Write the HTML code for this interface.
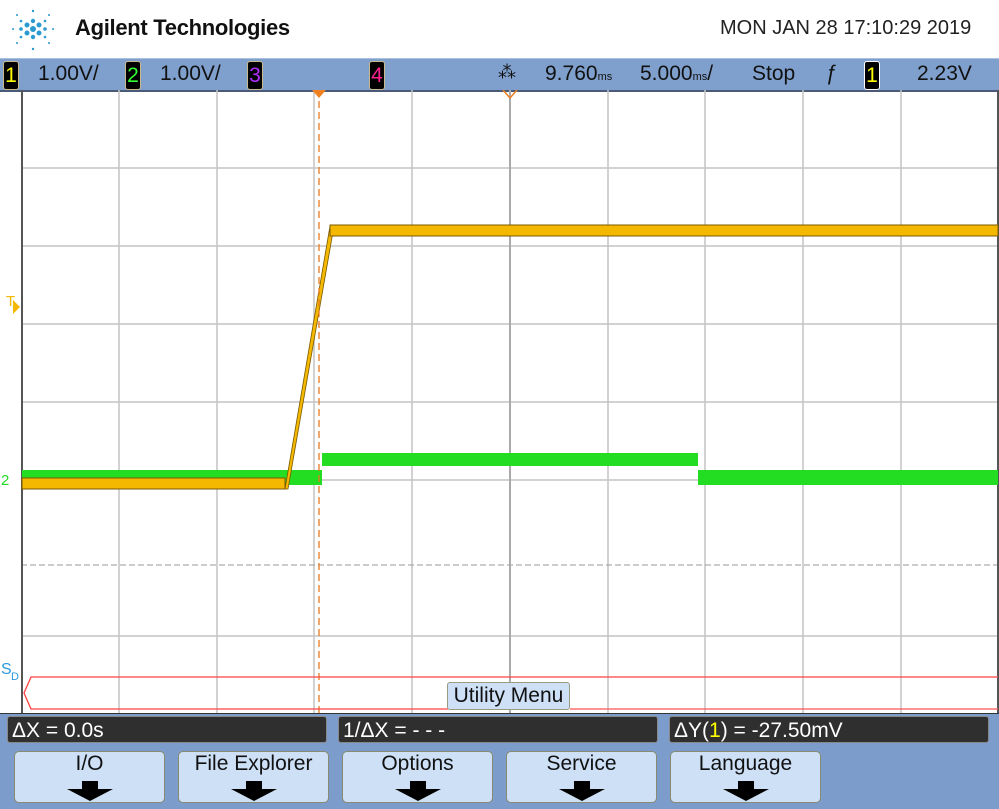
<!DOCTYPE html><html><head><style>
body{margin:0;width:999px;height:809px;overflow:hidden;background:#fff;font-family:"Liberation Sans",sans-serif;position:relative}
.a{position:absolute}
.bar{top:58px;left:0;width:999px;height:31px;background:#7f9fcc;border-top:1px solid #a9c0e0;border-bottom:2px solid #4a5a78}
.t{font-size:21px;color:#111;top:62px}
.ch{top:61px;width:14px;height:27px;background:#000;border:1px solid #c9b98a;border-radius:3px;font-size:21px;text-align:center;line-height:27px}
.bot{left:0;top:714px;width:999px;height:95px;background:#7c9ccb}
.st{top:716px;height:27px;background:#2f2f2f;border:1px solid #888;border-radius:3px;color:#fff;font-size:21px;line-height:27px;padding-left:4px;box-sizing:border-box}
.btn{top:751px;width:151px;height:52px;background:#cde0f6;border:1px solid #8a8a70;border-radius:5px;box-sizing:border-box;text-align:center;font-size:21px;color:#111}
.arr{position:absolute;left:50%;margin-left:-23px;top:29px}
</style></head><body>
<svg class="a" style="left:7px;top:3px" width="50" height="52" viewBox="0 0 50 52">
<g fill="#2a9ad0"><circle cx="26" cy="26" r="3"/><circle cx="20" cy="22" r="2.5"/><circle cx="32" cy="22" r="2.5"/><circle cx="20" cy="30" r="2.5"/><circle cx="32" cy="30" r="2.5"/><circle cx="26" cy="18" r="2.2"/><circle cx="26" cy="34" r="2.2"/><circle cx="14" cy="26" r="1.8"/><circle cx="38" cy="26" r="1.8"/><circle cx="14" cy="18" r="1.3"/><circle cx="38" cy="18" r="1.3"/><circle cx="14" cy="34" r="1.3"/><circle cx="38" cy="34" r="1.3"/><circle cx="26" cy="8" r="1.2"/><circle cx="26" cy="46" r="1.2"/><circle cx="6" cy="26" r="1"/><circle cx="46" cy="26" r="1"/><circle cx="10" cy="12" r="1"/><circle cx="42" cy="12" r="1"/><circle cx="10" cy="40" r="1"/><circle cx="42" cy="40" r="1"/></g></svg>
<div class="a" style="left:75px;top:15px;font-size:22px;font-weight:bold;color:#111;letter-spacing:-0.3px">Agilent Technologies</div>
<div class="a" style="left:720px;top:17px;font-size:20px;color:#222">MON JAN 28 17:10:29 2019</div>
<div class="a bar"></div>
<div class="a ch" style="left:3px;color:#ff0">1</div>
<div class="a t" style="left:38px">1.00V/</div>
<div class="a ch" style="left:125px;color:#3f3">2</div>
<div class="a t" style="left:160px">1.00V/</div>
<div class="a ch" style="left:247px;color:#b030ff">3</div>
<div class="a ch" style="left:369px;color:#ff2090">4</div>
<div class="a t" style="left:498px;font-size:18px">⁂</div>
<div class="a t" style="left:545px">9.760<span style="font-size:11px">ms</span></div>
<div class="a t" style="left:640px">5.000<span style="font-size:11px">ms</span>/</div>
<div class="a t" style="left:752px">Stop</div>
<div class="a t" style="left:826px">ƒ</div>
<div class="a ch" style="left:864px;color:#ff0;border-color:#fff">1</div>
<div class="a t" style="left:917px">2.23V</div>
<svg class="a" style="left:0;top:90px" width="999" height="625">
<g stroke="#c4c4c4" stroke-width="1.5">
<line x1="119" y1="0" x2="119" y2="624"/><line x1="217" y1="0" x2="217" y2="624"/><line x1="314" y1="0" x2="314" y2="624"/><line x1="412" y1="0" x2="412" y2="624"/><line x1="510" y1="0" x2="510" y2="624"/><line x1="608" y1="0" x2="608" y2="624"/><line x1="705" y1="0" x2="705" y2="624"/><line x1="803" y1="0" x2="803" y2="624"/><line x1="901" y1="0" x2="901" y2="624"/>
<line x1="21" y1="78" x2="998" y2="78"/><line x1="21" y1="156" x2="998" y2="156"/><line x1="21" y1="234" x2="998" y2="234"/><line x1="21" y1="312" x2="998" y2="312"/><line x1="21" y1="390" x2="998" y2="390"/><line x1="21" y1="546" x2="998" y2="546"/>
</g>
<line x1="21" y1="475" x2="998" y2="475" stroke="#999" stroke-dasharray="6,3"/>
<line x1="510" y1="0" x2="510" y2="624" stroke="#aaa" stroke-width="2"/>
<line x1="22" y1="0" x2="22" y2="624" stroke="#555" stroke-width="2"/>
<line x1="998" y1="0" x2="998" y2="624" stroke="#555" stroke-width="2"/>
<line x1="0" y1="624" x2="999" y2="624" stroke="#333" stroke-width="2"/>
<rect x="22" y="380" width="300" height="15" fill="#22dd22"/>
<rect x="322" y="363" width="376" height="13" fill="#22dd22"/>
<rect x="698" y="380" width="300" height="15" fill="#22dd22"/>
<rect x="22" y="388" width="263" height="11" fill="#f5b800" stroke="#7a5a00" stroke-width="1"/>
<polygon points="285,399 330,136 334,136 288,399" fill="#f5b800" stroke="#7a5a00" stroke-width="0.8"/>
<rect x="330" y="135" width="668" height="11" fill="#f5b800" stroke="#7a5a00" stroke-width="1"/>
<line x1="319" y1="0" x2="319" y2="624" stroke="#e87a20" stroke-width="1.3" stroke-dasharray="7,4"/>
<polygon points="312,0 326,0 319,8" fill="#f08020"/>
<polyline points="503,0 510,8 517,0" fill="none" stroke="#f08020" stroke-width="1.5"/>
<polyline points="998,587 31,587 24,603 31,619 448,619" fill="none" stroke="#ff4040" stroke-width="1.3"/>
<line x1="570" y1="619" x2="998" y2="619" stroke="#ff5050" stroke-width="1.3"/>
<text x="6" y="216" fill="#f5b800" font-size="15" font-family="Liberation Sans">T</text><polygon points="13,210 20,217 13,224" fill="#f5b800"/>
<text x="1" y="395" fill="#22dd22" font-size="15" font-family="Liberation Sans">2</text>
<text x="1" y="584" fill="#2a9ae0" font-size="16" font-family="Liberation Sans">S</text><text x="11" y="590" fill="#2a9ae0" font-size="11" font-family="Liberation Sans">D</text>
</svg>
<div class="a" style="left:447px;top:682px;width:123px;height:28px;background:#cde0f6;border:1px solid #9a9a80;border-radius:3px;font-size:21px;line-height:26px;text-align:center;color:#111;box-sizing:border-box">Utility Menu</div>
<div class="a bot"></div>
<div class="a st" style="left:7px;width:320px">ΔX = 0.0s</div>
<div class="a st" style="left:338px;width:320px">1/ΔX = - - -</div>
<div class="a st" style="left:669px;width:320px">ΔY(<span style="color:#ff0">1</span>) = -27.50mV</div>
<div class="a btn" style="left:14px">I/O<svg class="arr" width="46" height="20"><polygon points="15,0 31,0 31,8 46,8 23,20 0,8 15,8" fill="#000"/></svg></div>
<div class="a btn" style="left:178px">File Explorer<svg class="arr" width="46" height="20"><polygon points="15,0 31,0 31,8 46,8 23,20 0,8 15,8" fill="#000"/></svg></div>
<div class="a btn" style="left:342px">Options<svg class="arr" width="46" height="20"><polygon points="15,0 31,0 31,8 46,8 23,20 0,8 15,8" fill="#000"/></svg></div>
<div class="a btn" style="left:506px">Service<svg class="arr" width="46" height="20"><polygon points="15,0 31,0 31,8 46,8 23,20 0,8 15,8" fill="#000"/></svg></div>
<div class="a btn" style="left:670px">Language<svg class="arr" width="46" height="20"><polygon points="15,0 31,0 31,8 46,8 23,20 0,8 15,8" fill="#000"/></svg></div>
</body></html>
